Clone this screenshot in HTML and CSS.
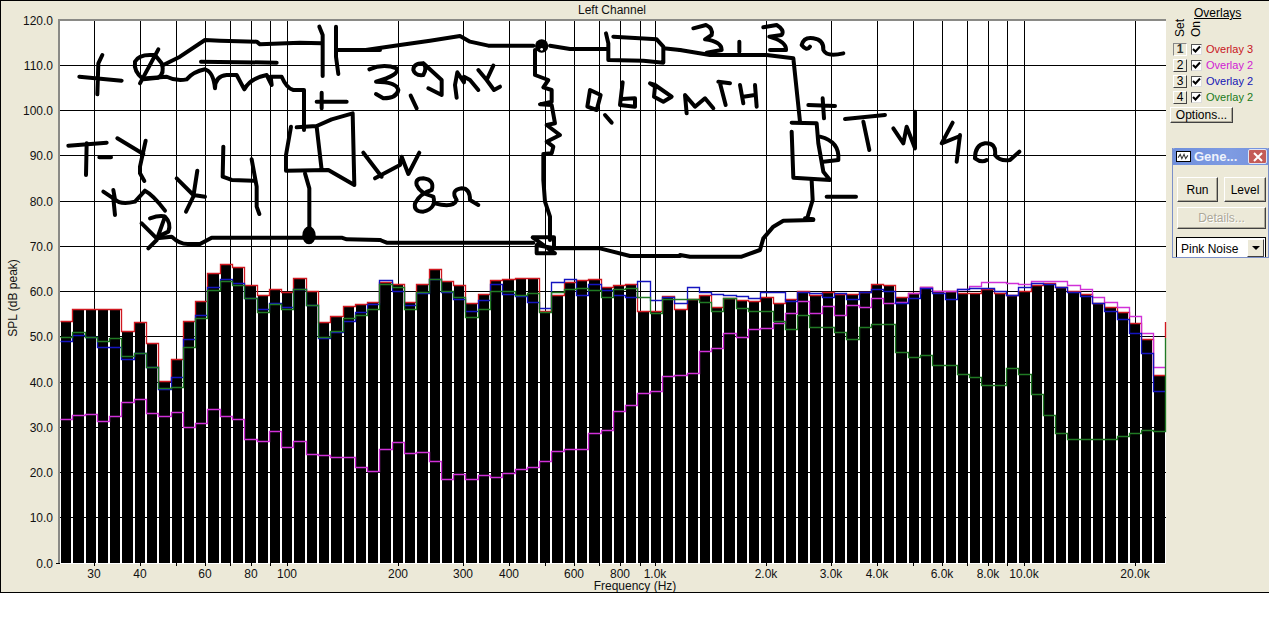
FILE: index.html
```html
<!DOCTYPE html>
<html lang="en">
<head>
<meta charset="utf-8">
<title>Left Channel</title>
<link rel="stylesheet" href="styles.css">
</head>
<body>
<main class="app">
  <svg class="chart" viewBox="1 1 1167 591" width="1167" height="591" xmlns="http://www.w3.org/2000/svg">
    <text class="label" x="612" y="14" text-anchor="middle">Left Channel</text>
    <rect class="plot" x="60" y="21" width="1106" height="543"/>
    <path class="frame" d="M59 564V20H1166"/>
    <path class="grid" d="M60 65.5H1166M60 110.5H1166M60 155.5H1166M60 201.5H1166M60 246.5H1166M60 291.5H1166M60 336.5H1166M60 382.5H1166M60 427.5H1166M60 472.5H1166M60 517.5H1166M56 563.5H60"/>
    <path class="grid" d="M94.5 21V566M140.5 21V566M176.5 21V566M205.5 21V566M230.5 21V566M251.5 21V566M270.5 21V566M287.5 21V566M398.5 21V566M463.5 21V566M509.5 21V566M545.5 21V566M574.5 21V566M599.5 21V566M620.5 21V566M640.5 21V566M655.5 21V566M766.5 21V566M831.5 21V566M877.5 21V566M913.5 21V566M942.5 21V566M967.5 21V566M988.5 21V566M1007.5 21V566M1024.5 21V566M1135.5 21V566"/>
    <g id="bars"></g>
    <g id="series"></g>

    <g class="sketch" transform="scale(.33333)">
      <path d="M238 230L365 242M307 165L295 190L292 283"/>
      <path d="M420 250L475 148M450 165Q415 165 405 185Q400 215 430 238L475 233Q495 220 485 190L465 165Z"/>
      <path d="M490 195L540 170L615 120L660 122L770 125L780 133L900 128L965 130"/>
      <path d="M958 80L968 105L968 228M1008 80L1008 170L1015 222M1012 150L1140 150"/>
      <path d="M603 185L830 188"/>
      <path d="M440 235L500 230Q530 245 560 238Q580 215 615 208Q640 215 645 265Q645 228 680 225L710 225L733 268Q750 235 800 225L815 255L812 230L845 230Q860 265 880 270L912 270L912 390"/>
      <path d="M890 382L950 378L995 358L1058 340L1063 555L985 510L858 512L858 465L873 380M950 380L965 510"/>
      <path d="M950 305L1040 305M965 278L965 325"/>
      <path d="M915 520L928 565L928 690"/>
      <ellipse class="fill" cx="927" cy="706" rx="20" ry="27"/>
      <path d="M425 670L470 715L515 710Q540 735 570 732L600 732L635 713L1025 713L1040 718L1140 720"/>
      <path d="M450 655Q480 645 495 650Q515 670 505 695L470 712M495 650L470 720L445 745"/>
      <path d="M205 437L320 428M260 430L258 525M298 472L333 472"/>
      <path d="M352 415L430 462M437 422L420 500L420 520L433 543"/>
      <path d="M310 575L340 595L345 645M340 570L345 598Q360 615 405 605L435 572Q460 585 495 632"/>
      <path d="M530 535L580 585L615 590M592 512L580 590L558 635"/>
      <path d="M670 440L668 530L695 540L760 542M755 478L770 560L770 620L778 642"/>
      <path d="M1090 458L1145 530"/>
      <path d="M1108 208Q1150 190 1190 205Q1200 225 1128 245Q1190 245 1195 270Q1190 295 1150 295L1128 282"/>
    </g>
    <g class="sketch" transform="translate(380) scale(.33333)">
      <path d="M-43 150L60 135L150 122L240 108L270 125L325 137L460 137"/>
      <circle class="fill" cx="485" cy="138" r="20"/>
      <circle class="hole" cx="485" cy="148" r="4"/>
      <path d="M510 137L570 147L680 147"/>
      <path d="M678 100L685 130L685 180L790 182L850 188L850 140L830 118L700 110M850 145L900 150"/>
      <path d="M465 150L465 225L505 240L490 262L515 270L515 305L480 313L515 315L525 370L500 375L540 405L500 425L520 440L515 460L490 462L490 540L495 605L510 650L510 720"/>
      <path d="M458 712L522 712L522 745L470 735L470 760L525 760Z"/>
      <path d="M0 720L20 728L460 728M525 745L660 745L750 768L900 768"/>
      <path d="M130 190Q100 190 100 210Q105 228 130 225Q142 205 130 190L185 240L185 285L145 265"/>
      <path d="M92 287L110 325"/>
      <path d="M230 293L225 255L232 217L252 247L252 230L270 240L295 270"/>
      <path d="M340 197L320 240L295 210M320 240L342 270L360 260"/>
      <path d="M630 270L622 320L650 330L662 285Z"/>
      <path d="M675 345L695 368"/>
      <path d="M728 247L720 315L765 320L765 295L725 297"/>
      <path d="M810 250L825 255L875 290L850 305L822 290L825 260Z"/>
      <path d="M-15 535L60 495L65 470L85 522L118 458"/>
      <path d="M130 535Q105 535 110 555Q120 580 160 590Q170 625 130 635Q100 635 105 610Q120 580 155 570Q165 540 130 535Z"/>
      <path d="M165 610Q220 625 230 600Q210 570 245 565Q270 565 270 600L295 615"/>
    </g>
    <g class="sketch" transform="translate(680) scale(.33333)">
      <path d="M0 150L90 165L260 165L340 175L360 365"/>
      <path d="M40 85L78 75Q100 85 95 105L75 118Q125 125 125 150L80 158"/>
      <path d="M178 125L178 155"/>
      <path d="M250 82L290 75Q315 90 305 105L268 110Q320 125 318 150L270 150"/>
      <path d="M365 135Q372 110 400 115Q432 120 430 150Q440 172 490 160M365 135Q380 155 390 140"/>
      <path d="M20 340L15 285L45 320L75 295L100 325"/>
      <path d="M115 245L150 250M120 250L137 315"/>
      <path d="M180 255L190 310M190 290L225 285M225 255L230 320"/>
      <path d="M385 315L465 318M428 295L432 355"/>
      <path d="M495 357L615 345M550 365L568 450"/>
      <path d="M640 385L670 430L680 380L705 445L705 335"/>
      <path d="M818 368L785 430L840 408M840 405L830 485"/>
      <path d="M885 475Q885 435 915 430Q950 428 945 465Q960 485 990 480L1018 455M885 475Q905 490 920 480"/>
      <path d="M335 368L410 370L415 430L430 515L450 540L340 533L335 395"/>
      <path d="M420 410Q480 425 475 480L430 485"/>
      <path d="M395 542L398 600L380 660M375 655L400 658"/>
      <path d="M400 660L310 662L280 680L250 715L240 750L185 770L30 770L0 765"/>
      <path d="M440 590L528 590"/>
    </g>

    <g class="label ylabels" text-anchor="end">
      <text x="53" y="25">120.0</text>
      <text x="53" y="70">110.0</text>
      <text x="53" y="115">100.0</text>
      <text x="53" y="160">90.0</text>
      <text x="53" y="206">80.0</text>
      <text x="53" y="251">70.0</text>
      <text x="53" y="296">60.0</text>
      <text x="53" y="341">50.0</text>
      <text x="53" y="387">40.0</text>
      <text x="53" y="432">30.0</text>
      <text x="53" y="477">20.0</text>
      <text x="53" y="522">10.0</text>
      <text x="53" y="568">0.0</text>
    </g>
    <g class="label" text-anchor="middle">
      <text x="94" y="578">30</text>
      <text x="140" y="578">40</text>
      <text x="205" y="578">60</text>
      <text x="251" y="578">80</text>
      <text x="287" y="578">100</text>
      <text x="398" y="578">200</text>
      <text x="463" y="578">300</text>
      <text x="509" y="578">400</text>
      <text x="574" y="578">600</text>
      <text x="620" y="578">800</text>
      <text x="655" y="578">1.0k</text>
      <text x="766" y="578">2.0k</text>
      <text x="831" y="578">3.0k</text>
      <text x="877" y="578">4.0k</text>
      <text x="942" y="578">6.0k</text>
      <text x="988" y="578">8.0k</text>
      <text x="1024" y="578">10.0k</text>
      <text x="1135" y="578">20.0k</text>
      <text x="635" y="590">Frequency (Hz)</text>
      <text x="17" y="298" transform="rotate(-90 17 298)">SPL (dB peak)</text>
    </g>
  </svg>

  <aside class="side">
    <h2 class="overlays-title">Overlays</h2>
    <div class="overlay-heads">
      <span class="vert">Set</span>
      <span class="vert">On</span>
    </div>
    <ul class="overlay-list">
      <li class="overlay"><span class="setbtn active">1</span><span class="check"><svg viewBox="0 0 9 9"><path d="M1 4l2.5 2.5L8 1.5"/></svg></span><span class="red">Overlay 3</span></li>
      <li class="overlay"><span class="setbtn">2</span><span class="check"><svg viewBox="0 0 9 9"><path d="M1 4l2.5 2.5L8 1.5"/></svg></span><span class="magenta">Overlay 2</span></li>
      <li class="overlay"><span class="setbtn">3</span><span class="check"><svg viewBox="0 0 9 9"><path d="M1 4l2.5 2.5L8 1.5"/></svg></span><span class="blue">Overlay 2</span></li>
      <li class="overlay"><span class="setbtn">4</span><span class="check"><svg viewBox="0 0 9 9"><path d="M1 4l2.5 2.5L8 1.5"/></svg></span><span class="green">Overlay 2</span></li>
    </ul>
    <button class="btn options">Options...</button>

    <section class="gen">
      <header class="gen-title">
        <span class="gen-icon"><svg viewBox="0 0 12 8"><path d="M1 5l2-3 1.5 4 2-4 1.5 4 2-3"/></svg></span>
        <span class="gen-name">Gene...</span>
        <span class="gen-close"><svg viewBox="0 0 10 10"><path d="M1 1l8 8M9 1l-8 8"/></svg></span>
      </header>
      <div class="gen-body">
        <div class="gen-row">
          <button class="btn run">Run</button>
          <button class="btn level">Level</button>
        </div>
        <button class="btn details" disabled>Details...</button>
        <div class="combo"><span class="combo-text">Pink Noise</span><span class="combo-arrow"></span></div>
      </div>
    </section>
  </aside>
</main>
<script src="app.js"></script>
</body>
</html>
```
FILE: styles.css
```css
* { box-sizing: border-box; }
html, body { margin: 0; padding: 0; background: #fff; }
body { font-family: "Liberation Sans", Arial, sans-serif; font-size: 12px; color: #000; }

.app {
  display: flex;
  width: 1269px;
  height: 593px;
  background: #ece9d8;
  border-top: 1px solid #000;
  border-left: 1px solid #000;
  border-bottom: 1px solid #000;
}

.chart { display: block; flex: none; }
.label { font-family: "Liberation Sans", Arial, sans-serif; font-size: 12px; fill: #111; }
.plot { fill: #fff; }
.frame { fill: none; stroke: #8a8a86; stroke-width: 2; }
.grid { fill: none; stroke: #000; stroke-width: 1; shape-rendering: crispEdges; }
.bar { fill: #000; shape-rendering: crispEdges; }
.line { fill: none; stroke-width: 1.35; stroke-linejoin: miter; }
.line-red { stroke: #d01820; }
.line-magenta { stroke: #d030d8; }
.line-blue { stroke: #1414c0; }
.line-green { stroke: #207a24; }
.sketch path { fill: none; stroke: #000; stroke-width: 12; stroke-linecap: round; stroke-linejoin: round; }
.sketch .fill { fill: #000; }
.sketch .hole { fill: #fff; }

.side { flex: 1; display: flex; flex-direction: column; padding: 5px 0 0 5px; min-width: 0; }
.overlays-title { margin: 0 0 0 21px; font-size: 12px; font-weight: normal; line-height: 14px; text-decoration: underline; }
.overlay-heads { display: flex; align-items: flex-end; height: 18px; margin-top: -1px; margin-bottom: 4px; padding-left: 1px; gap: 4px; }
.vert { writing-mode: vertical-rl; transform: rotate(180deg); line-height: 12px; }
.overlay-list { list-style: none; margin: 0; padding: 0; }
.overlay { display: flex; align-items: center; gap: 4px; height: 16px; font-size: 11px; }
.setbtn {
  width: 14px; height: 13px; text-align: center; line-height: 11px; font-size: 12px;
  background: #ece9d8; border: 1px solid; border-color: #fff #444 #444 #fff;
}
.setbtn.active { font-weight: bold; border-color: #888 #fff #fff #888; color: #333; }
.check { width: 11px; height: 11px; background: #fff; border: 1px solid; border-color: #555 #ddd #ddd #555; display: flex; }
.check svg { display: block; width: 9px; height: 9px; }
.check path { fill: none; stroke: #000; stroke-width: 2; }
.red { color: #c8141c; }
.magenta { color: #d020d4; }
.blue { color: #1414b4; }
.green { color: #1a7a1a; }

.btn {
  font: 12px "Liberation Sans", Arial, sans-serif;
  color: #000;
  background: #ece9d8;
  padding: 0;
  border: 1px solid;
  border-color: #fff #404040 #404040 #fff;
  box-shadow: inset -1px -1px 0 #aca899;
}
.options { width: 63px; height: 16px; margin: 2px 0 0 -3px; line-height: 13px; }

.gen { width: 97px; height: 110px; margin: 25px 0 0 -1px; overflow: hidden; border: 1px solid #7c90c8; border-top: 0; background: #ece9d8; }
.gen-title {
  display: flex; align-items: center; height: 17px; margin: 0 -1px; padding: 0 2px 0 4px;
  background: linear-gradient(90deg, #6f8fdc, #7e9be2 60%, #7391dd);
  border-radius: 3px 3px 0 0;
}
.gen-icon { width: 15px; height: 11px; background: #fff; border: 1px solid #000; flex: none; display: flex; }
.gen-icon svg { display: block; width: 13px; height: 9px; }
.gen-icon path { fill: none; stroke: #333; stroke-width: 1; }
.gen-name { margin-left: 3px; flex: 1; color: #eef2fb; font-weight: bold; font-size: 13px; line-height: 16px; }
.gen-close { width: 19px; height: 15px; flex: none; display: flex; align-items: center; justify-content: center; background: #c45c58; border: 1px solid #dfe4f4; border-radius: 2px; }
.gen-close svg { width: 10px; height: 10px; }
.gen-close path { stroke: #fff; stroke-width: 2; fill: none; }
.gen-body { display: flex; flex-direction: column; align-items: flex-start; padding: 12px 0 0 4px; }
.gen-row { display: flex; gap: 6px; }
.run { width: 41px; height: 25px; }
.level { width: 42px; height: 25px; }
.details { width: 89px; height: 22px; margin-top: 5px; color: #aca899; text-shadow: 1px 1px 0 #fff; }
.combo {
  display: flex; align-items: center; justify-content: space-between; width: 90px; height: 22px; margin: 8px 0 0 -1px;
  padding: 0 1px 0 4px; background: #fff; border: 1px solid #000; line-height: 18px;
}
.combo-text { padding-top: 2px; }
.combo-arrow {
  position: relative; width: 17px; height: 18px; background: #ece9d8;
  border: 1px solid; border-color: #fff #404040 #404040 #fff;
}
.combo-arrow::after {
  content: ""; position: absolute; left: 4px; top: 6px;
  border: 4px solid transparent; border-top-color: #000; border-bottom: 0;
}
```
FILE: app.js
```js
var RED = [321.3,309.3,308.7,309.3,309.3,330.7,322.3,342.7,381.3,359.3,320.7,300.7,272.7,263.7,267.3,284.7,294.7,289.3,292.3,277.7,290.7,322.3,316.3,306.3,304.3,301.7,282.3,284.3,302.3,284.3,268.7,281.3,285.3,303.3,294.3,280.3,279,277.7,277.7,311,295.3,282.3,279.7,278.7,286.7,284.7,284.3,310.7,310.7,295.7,308.7,298.7,294.7,306.7,297.7,299.7,301,296.7,302.7,298.7,290.7,295.3,292.3,294.3,293.7,292.3,284.3,285.3,297.3,293.3,286.7,290.7,291.3,292.7,293.3,289,293,294.7,290.7,284.7,282.7,287.3,291.3,294.3,302.7,307.3,312.3,322.7,339,375];
var BLUE = [341,334.7,336.7,346.7,346.7,359.3,352.7,367,389.3,376.7,338.7,315,287.3,279,282.7,298.3,308.7,303.3,306.7,289.3,305.3,338.3,332,320.7,312.3,304.3,280.3,291.3,305.3,293.3,279,292.3,298.7,310.7,300.3,284.3,294.3,296.3,302.3,307.7,282.3,279.3,295,284.3,290.3,295,296.7,281.3,300.3,297.3,303.3,286.7,292.3,294.3,294.7,296,297.7,292.3,292.3,300.7,292.3,293.3,297,292.7,299.3,292.3,289.3,290.7,303.3,298.3,288.3,293,298.7,289,288.3,288.3,290.7,295,287.3,282.7,284.3,287.3,291.7,296.3,303.3,311.3,319,332.7,352.7,390.7];
var GREEN = [337.3,332.3,336.7,340.7,338.3,356.3,352.7,367,388.3,386.7,346.7,318.3,290.3,281.3,284.7,298.3,312.3,304.3,309.3,289.3,305.3,336.7,331.3,318.3,315.3,309.3,284.3,286.7,308.7,292.3,279,290.7,297,316.7,309.3,291.3,291.3,295.3,293.3,312.3,292.3,289.3,288.3,290.3,297.3,289.3,288.3,297.3,313.3,299.3,299.3,299.3,302.3,311.3,298.3,308.3,311.3,311.3,321.3,329.3,315.3,327.3,326.7,332.3,339.3,326.7,324.3,324.3,352.3,357.3,355.3,364.7,365.3,374.3,377.3,384.7,385.3,368.3,374.3,394.3,415.3,433.3,439.3,439.3,438.7,439.3,436.3,433.3,430.3,431.3];
var MAGENTA = [419.3,415,414.3,420.7,416.3,402.3,399.3,413.3,416.3,412.3,426.7,422.7,409.3,416.3,419.3,439.3,440.7,431.3,447.3,441.3,454,454.7,456.7,457.3,466.7,470.7,448.7,442.3,453.3,452.3,461.3,479.3,474.3,479.3,475.3,476.7,473.3,469.3,467.3,461.3,451.3,449.3,449.3,432.7,430.3,411.3,405.3,393.3,391.3,376.3,375,372.7,351.3,348.3,333.3,336.7,329.3,328.3,323,313.3,301.3,313.3,306.3,314.7,305.3,307.3,298.3,303.3,302.3,293.3,286.7,290.7,290.7,289.3,286.3,282.3,282.3,283.3,284.3,280.7,280.7,280.7,285.3,289.3,296.7,302.3,306.7,316.3,332.7,367.3];

var NS = "http://www.w3.org/2000/svg";
var PITCH = 12.285;
var START = 61;
var BASE = 563;

function el(name, attrs, parent) {
  var node = document.createElementNS(NS, name);
  Object.keys(attrs).forEach(function (key) { node.setAttribute(key, attrs[key]); });
  parent.appendChild(node);
  return node;
}

var bars = document.getElementById("bars");
RED.forEach(function (top, i) {
  var x = Math.round(START + PITCH * i);
  var next = Math.round(START + PITCH * (i + 1));
  var y = Math.round(top);
  el("rect", { "class": "bar", x: x, y: y, width: next - x - 2, height: BASE - y }, bars);
});

function stepPath(values, tail) {
  var d = "";
  values.forEach(function (v, i) {
    var y = Math.round(v) + 0.5;
    var x0 = Math.round(START + PITCH * i) - 0.5;
    var x1 = Math.round(START + PITCH * (i + 1)) - 0.5;
    if (x1 > 1165.5) { x1 = 1165.5; }
    d += (i ? "L" : "M") + x0 + " " + y + "L" + x1 + " " + y;
  });
  return d + (tail || "");
}

var series = document.getElementById("series");
el("path", { "class": "line line-red", d: stepPath(RED) }, series);
el("path", { "class": "line line-red", d: "M1165.5 322V338" }, series);
el("path", { "class": "line line-magenta", d: stepPath(MAGENTA) }, series);
el("path", { "class": "line line-blue", d: stepPath(BLUE) }, series);
el("path", { "class": "line line-green", d: stepPath(GREEN, "V338") }, series);
```
